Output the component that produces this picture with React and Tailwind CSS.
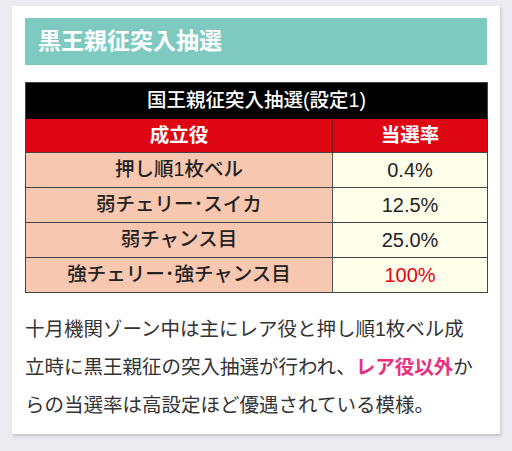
import React from "react";

const rows = [
  { name: "押し順1枚ベル", rate: "0.4%" },
  { name: "弱チェリー･スイカ", rate: "12.5%" },
  { name: "弱チャンス目", rate: "25.0%" },
  { name: "強チェリー･強チャンス目", rate: "100%", hot: true },
];

export default function App() {
  return (
    <div
      className="min-h-[451px] w-[512px] bg-[#ebebf0] pt-[6px] pl-[12px]"
      style={{ fontFamily: '"Liberation Sans", "Noto Sans CJK JP", sans-serif' }}
    >
      <div className="w-[488px] bg-white px-[13px] pt-[12px] pb-[10px] shadow-[1px_2px_3px_rgba(0,0,0,0.18)]">
        {/* 見出し */}
        <div className="flex h-[47px] items-center bg-[#7ecac0] pl-[13px] text-[23px] font-bold text-white">
          黒王親征突入抽選
        </div>

        {/* 抽選テーブル */}
        <table className="mt-[17px] w-[462px] table-fixed border-collapse border border-[#444] text-[19.5px] leading-none">
          <colgroup>
            <col className="w-[307px]" />
            <col className="w-[155px]" />
          </colgroup>
          <thead>
            <tr className="h-[36px] bg-black text-white">
              <th colSpan={2} className="font-medium">
                国王親征突入抽選(設定1)
              </th>
            </tr>
            <tr className="h-[34px] bg-[#df0614] text-white">
              <th className="border-r border-[#7a1010] font-bold">成立役</th>
              <th className="font-bold">当選率</th>
            </tr>
          </thead>
          <tbody>
            {rows.map((r) => (
              <tr key={r.name} className="h-[35px] border-t border-[#444]">
                <td className="border-r border-[#555] bg-[#f7c7af] text-center font-medium text-[#222]">
                  {r.name}
                </td>
                <td
                  className={
                    r.hot
                      ? "bg-[#fefeea] text-center text-[20px] text-[#e60012]"
                      : "bg-[#fefeea] text-center text-[20px] text-[#222]"
                  }
                >
                  {r.rate}
                </td>
              </tr>
            ))}
          </tbody>
        </table>

        {/* 説明文 */}
        <p className="mt-[17px] text-[19.5px] leading-[38px] text-[#333]">
          十月機関ゾーン中は主にレア役と押し順1枚ベル成
          <br />
          立時に黒王親征の突入抽選が行われ、
          <span className="font-bold text-[#e8307f]">レア役以外</span>か
          <br />
          らの当選率は高設定ほど優遇されている模様。
        </p>
      </div>
    </div>
  );
}
